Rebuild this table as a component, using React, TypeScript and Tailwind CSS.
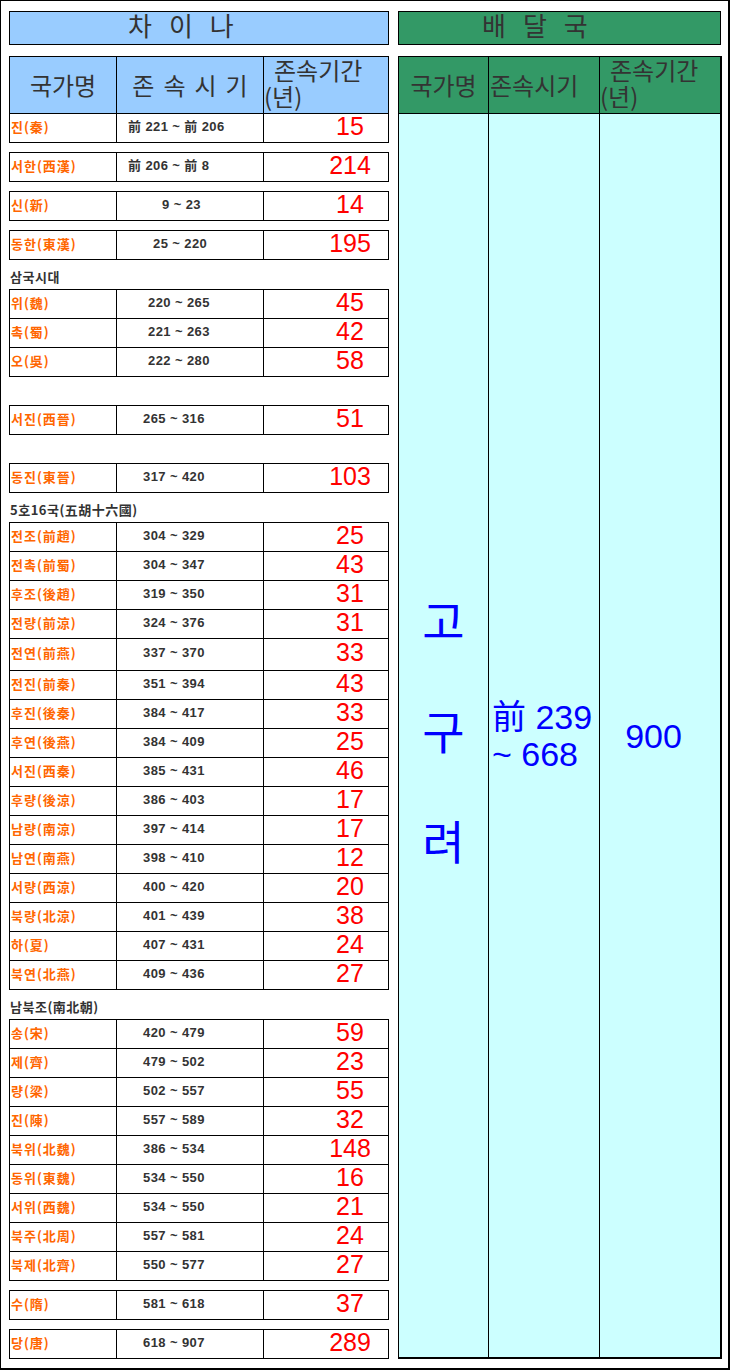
type Row = {
  name: string;
  period: string;
  years: string;
  pad: string;
  tall?: boolean;
};

type Block =
  | { kind: "table"; rows: Row[]; gap: string }
  | { kind: "label"; text: string };

const blocks: Block[] = [
  { kind: "table", gap: "mt-[9px]", rows: [{ name: "서한(西漢)", period: "前 206 ~ 前 8", years: "214", pad: "pl-[11px]" }] },
  { kind: "table", gap: "mt-[9px]", rows: [{ name: "신(新)", period: "9 ~ 23", years: "14", pad: "pl-[45px]" }] },
  { kind: "table", gap: "mt-[9px]", rows: [{ name: "동한(東漢)", period: "25 ~ 220", years: "195", pad: "pl-[36px]" }] },
  { kind: "label", text: "삼국시대" },
  {
    kind: "table",
    gap: "",
    rows: [
      { name: "위(魏)", period: "220 ~ 265", years: "45", pad: "pl-[31px]" },
      { name: "촉(蜀)", period: "221 ~ 263", years: "42", pad: "pl-[31px]" },
      { name: "오(吳)", period: "222 ~ 280", years: "58", pad: "pl-[31px]" },
    ],
  },
  { kind: "table", gap: "mt-[28px]", rows: [{ name: "서진(西晉)", period: "265 ~ 316", years: "51", pad: "pl-[26px]" }] },
  { kind: "table", gap: "mt-[28px]", rows: [{ name: "동진(東晉)", period: "317 ~ 420", years: "103", pad: "pl-[26px]" }] },
  { kind: "label", text: "5호16국(五胡十六國)" },
  {
    kind: "table",
    gap: "",
    rows: [
      { name: "전조(前趙)", period: "304 ~ 329", years: "25", pad: "pl-[26px]" },
      { name: "전촉(前蜀)", period: "304 ~ 347", years: "43", pad: "pl-[26px]" },
      { name: "후조(後趙)", period: "319 ~ 350", years: "31", pad: "pl-[26px]" },
      { name: "전량(前涼)", period: "324 ~ 376", years: "31", pad: "pl-[26px]" },
      { name: "전연(前燕)", period: "337 ~ 370", years: "33", pad: "pl-[26px]", tall: true },
      { name: "전진(前秦)", period: "351 ~ 394", years: "43", pad: "pl-[26px]" },
      { name: "후진(後秦)", period: "384 ~ 417", years: "33", pad: "pl-[26px]" },
      { name: "후연(後燕)", period: "384 ~ 409", years: "25", pad: "pl-[26px]" },
      { name: "서진(西秦)", period: "385 ~ 431", years: "46", pad: "pl-[26px]" },
      { name: "후량(後涼)", period: "386 ~ 403", years: "17", pad: "pl-[26px]" },
      { name: "남량(南涼)", period: "397 ~ 414", years: "17", pad: "pl-[26px]" },
      { name: "남연(南燕)", period: "398 ~ 410", years: "12", pad: "pl-[26px]" },
      { name: "서량(西涼)", period: "400 ~ 420", years: "20", pad: "pl-[26px]" },
      { name: "북량(北涼)", period: "401 ~ 439", years: "38", pad: "pl-[26px]" },
      { name: "하(夏)", period: "407 ~ 431", years: "24", pad: "pl-[26px]" },
      { name: "북연(北燕)", period: "409 ~ 436", years: "27", pad: "pl-[26px]" },
    ],
  },
  { kind: "label", text: "남북조(南北朝)" },
  {
    kind: "table",
    gap: "",
    rows: [
      { name: "송(宋)", period: "420 ~ 479", years: "59", pad: "pl-[26px]" },
      { name: "제(齊)", period: "479 ~ 502", years: "23", pad: "pl-[26px]" },
      { name: "량(梁)", period: "502 ~ 557", years: "55", pad: "pl-[26px]" },
      { name: "진(陳)", period: "557 ~ 589", years: "32", pad: "pl-[26px]" },
      { name: "북위(北魏)", period: "386 ~ 534", years: "148", pad: "pl-[26px]" },
      { name: "동위(東魏)", period: "534 ~ 550", years: "16", pad: "pl-[26px]" },
      { name: "서위(西魏)", period: "534 ~ 550", years: "21", pad: "pl-[26px]" },
      { name: "북주(北周)", period: "557 ~ 581", years: "24", pad: "pl-[26px]" },
      { name: "북제(北齊)", period: "550 ~ 577", years: "27", pad: "pl-[26px]" },
    ],
  },
  { kind: "table", gap: "mt-[9px]", rows: [{ name: "수(隋)", period: "581 ~ 618", years: "37", pad: "pl-[26px]" }] },
  { kind: "table", gap: "mt-[9px]", rows: [{ name: "당(唐)", period: "618 ~ 907", years: "289", pad: "pl-[26px]" }] },
];

const DataRow = ({ r }: { r: Row }) => (
  <div
    className={`grid grid-cols-[107px_147px_125px] border-b border-black ${r.tall ? "h-[32px]" : "h-[29px]"}`}
  >
    <div className="border-r border-black flex items-center pl-px pb-[3px] text-[13px] font-bold tracking-[1px] text-[#ff6600] whitespace-nowrap">
      {r.name}
    </div>
    <div
      className={`border-r border-black flex items-center ${r.pad} pb-[3px] text-[13px] font-bold tracking-[0.4px] text-[#333333] whitespace-nowrap font-["Liberation_Sans","Noto_Sans_CJK_KR",sans-serif]`}
    >
      {r.period}
    </div>
    <div className="border-r border-black flex items-center justify-end pr-[8px] pb-[4px]">
      <span className="w-[60px] text-center text-[25px] leading-none text-[#ff0000] font-['Liberation_Sans',sans-serif]">
        {r.years}
      </span>
    </div>
  </div>
);

const Spaced = ({ text, gap }: { text: string; gap: string }) => (
  <div className={`flex ${gap}`}>
    {text.split("").map((c, i) => (
      <span key={i}>{c}</span>
    ))}
  </div>
);

const App = () => {
  return (
    <div className="w-[730px] h-[1370px] bg-white border-l border-t border-r-2 border-b-2 border-black pl-[8px] pt-[10px] flex items-start gap-[9px] text-[#333333] font-['Noto_Sans_CJK_KR',sans-serif]">
      {/* 차이나 */}
      <div className="w-[380px] flex flex-col">
        <div className="h-[34px] border border-black bg-[#99ccff] flex items-center pl-[118px] pb-[6px] text-[26px] leading-none">
          <Spaced text="차이나" gap="gap-[17px]" />
        </div>

        <div className="mt-[11px] border-l border-t border-black">
          <div className="grid grid-cols-[107px_147px_125px] h-[57px] border-b border-black bg-[#99ccff] text-[24px]">
            <div className="border-r border-black flex items-center justify-center leading-none">
              국가명
            </div>
            <div className="border-r border-black flex items-center justify-center leading-none">
              <Spaced text="존속시기" gap="gap-[9px]" />
            </div>
            <div className="border-r border-black flex flex-col gap-[2px] pt-[1px] leading-[24px] whitespace-nowrap">
              <div className="pl-[10px]">존속기간</div>
              <div>(년)</div>
            </div>
          </div>
          <DataRow r={{ name: "진(秦)", period: "前 221 ~ 前 206", years: "15", pad: "pl-[11px]" }} />
        </div>

        {blocks.map((b, i) =>
          b.kind === "label" ? (
            <div
              key={i}
              className="h-[29px] flex items-center pt-[4px] pl-px text-[13px] font-bold tracking-[0.5px] text-[#333333]"
            >
              {b.text}
            </div>
          ) : (
            <div key={i} className={`${b.gap} border-l border-t border-black`}>
              {b.rows.map((r, j) => (
                <DataRow key={j} r={r} />
              ))}
            </div>
          )
        )}
      </div>

      {/* 배달국 */}
      <div className="w-[324px] flex flex-col">
        <div className="w-[323px] h-[34px] border border-black bg-[#339966] flex items-center pl-[83px] pb-[6px] text-[26px] leading-none">
          <Spaced text="배달국" gap="gap-[17px]" />
        </div>

        <div className="mt-[11px] border-l border-t border-r-2 border-b-2 border-black">
          <div className="grid grid-cols-[90px_111px_120px] h-[57px] border-b border-black bg-[#339966] text-[24px]">
            <div className="border-r border-black flex items-center justify-center leading-none">
              국가명
            </div>
            <div className="border-r border-black flex items-center pl-px leading-none whitespace-nowrap">
              존속시기
            </div>
            <div className="flex flex-col gap-[2px] pt-[1px] leading-[24px] whitespace-nowrap">
              <div className="pl-[10px]">존속기간</div>
              <div>(년)</div>
            </div>
          </div>
          <div className="grid grid-cols-[90px_111px_120px] h-[1243px] bg-[#ccffff] text-[#0000ff]">
            <div className="border-r border-black flex items-center justify-center pb-[12px]">
              <div className="text-[46px] leading-[55px] text-center">
                고<br />
                <br />
                구<br />
                <br />려
              </div>
            </div>
            <div className="border-r border-black flex items-center pl-[3px]">
              <div className="text-[34px] leading-[37px] whitespace-nowrap font-['Liberation_Sans','Noto_Sans_CJK_KR',sans-serif]">
                前 239
                <br />~ 668
              </div>
            </div>
            <div className="flex items-center justify-center pr-[13px]">
              <span className="text-[34px] leading-none font-['Liberation_Sans',sans-serif]">900</span>
            </div>
          </div>
        </div>
      </div>
    </div>
  );
};

export default App;
